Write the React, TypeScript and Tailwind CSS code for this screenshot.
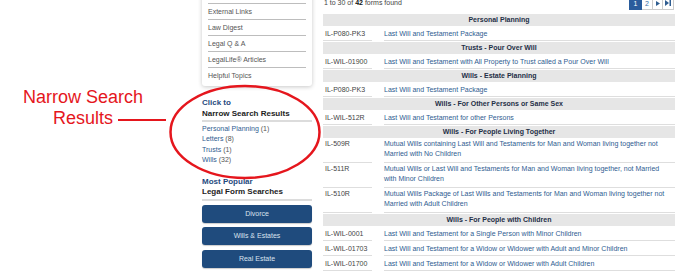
import React from 'react'

type Row =
  | { kind: 'group'; label: string }
  | { kind: 'form'; code: string; title: string; tall?: boolean }

const rows: Row[] = [
  { kind: 'group', label: 'Personal Planning' },
  { kind: 'form', code: 'IL-P080-PK3', title: 'Last Will and Testament Package' },
  { kind: 'group', label: 'Trusts - Pour Over Will' },
  { kind: 'form', code: 'IL-WIL-01900', title: 'Last Will and Testament with All Property to Trust called a Pour Over Will' },
  { kind: 'group', label: 'Wills - Estate Planning' },
  { kind: 'form', code: 'IL-P080-PK3', title: 'Last Will and Testament Package' },
  { kind: 'group', label: 'Wills - For Other Persons or Same Sex' },
  { kind: 'form', code: 'IL-WIL-512R', title: 'Last Will and Testament for other Persons' },
  { kind: 'group', label: 'Wills - For People Living Together' },
  { kind: 'form', code: 'IL-509R', title: 'Mutual Wills containing Last Will and Testaments for Man and Woman living together not Married with No Children', tall: true },
  { kind: 'form', code: 'IL-511R', title: 'Mutual Wills or Last Will and Testaments for Man and Woman living together, not Married with Minor Children', tall: true },
  { kind: 'form', code: 'IL-510R', title: 'Mutual Wills Package of Last Wills and Testaments for Man and Woman living together not Married with Adult Children', tall: true },
  { kind: 'group', label: 'Wills - For People with Children' },
  { kind: 'form', code: 'IL-WIL-0001', title: 'Last Will and Testament for a Single Person with Minor Children' },
  { kind: 'form', code: 'IL-WIL-01703', title: 'Last Will and Testament for a Widow or Widower with Adult and Minor Children' },
  { kind: 'form', code: 'IL-WIL-01700', title: 'Last Will and Testament for a Widow or Widower with Adult Children' },
]

// first entry is the row scrolled out of view above the crop
const menu = ['', 'External Links', 'Law Digest', 'Legal Q & A', 'LegalLife® Articles', 'Helpful Topics']
const narrow = ['Personal Planning (1)', 'Letters (8)', 'Trusts (1)', 'Wills (32)']
const popular = ['Divorce', 'Wills & Estates', 'Real Estate']

export default function App() {
  return (
    <div className="relative w-[697px] h-[271px] overflow-hidden bg-white font-['Liberation_Sans',Arial,sans-serif]">
      <div className="flex items-start pl-[202px]">
        {/* Sidebar */}
        <aside className="w-[110px] -mt-[12px]">
          <div className="bg-white px-[6px] pb-[2px] rounded-b-[3px] shadow-[0_1px_4px_rgba(0,0,0,0.22)]">
            {menu.map((item, i) => (
              <div
                key={i}
                className={`h-[16px] leading-[16px] text-[7px] text-[#555] ${i < menu.length - 1 ? 'border-b border-[#bdbdbd]' : ''}`}
              >
                {item}
              </div>
            ))}
          </div>

          <div className="mt-[10.5px] text-[8px] leading-[11px] font-bold border-b-2 border-[#dcdcdc] pb-[1px]">
            <div className="text-[#1f4a7e]">Click to</div>
            <div className="text-[#222]">Narrow Search Results</div>
          </div>
          <div className="pt-[2px] text-[7px] leading-[10.5px]">
            {narrow.map((n) => {
              const [name, count] = n.split(' (')
              return (
                <div key={n}>
                  <span className="text-[#2f5d91]">{name}</span>
                  <span className="text-[#555]"> ({count}</span>
                </div>
              )
            })}
          </div>

          <div className="mt-[11px] text-[8px] leading-[10px] font-bold border-b-2 border-[#dcdcdc] pb-[2px]">
            <div className="text-[#1f4a7e]">Most Popular</div>
            <div className="text-[#222]">Legal Form Searches</div>
          </div>
          <div className="mt-[4px] flex flex-col gap-[4.5px]">
            {popular.map((p) => (
              <div
                key={p}
                className="h-[18px] rounded-[3px] bg-[#1f4b7d] text-[#d9e2ee] text-[7px] leading-[18px] text-center shadow-[0_1px_1px_rgba(0,0,0,0.2)]"
              >
                {p}
              </div>
            ))}
          </div>
        </aside>

        {/* Results */}
        <main className="ml-[11px] w-[352px] -mt-[6px]">
          <div className="flex items-end justify-between h-[16px]">
            <div className="text-[7px] leading-[10px] text-[#444] pl-[1px] mb-[2px]">
              1 to 30 of <b className="text-[#111]">42</b> forms found
            </div>
            <div className="flex h-[14px] text-[7px] leading-[13px] mr-[1px]">
              <div className="w-[13px] bg-[#2a5c9c] text-white text-center border border-[#2a5c9c]">1</div>
              <div className="w-[11px] border border-[#ccc] border-l-0 text-[#3a6ea5] text-center">2</div>
              <div className="w-[10px] border border-[#ccc] border-l-0 flex items-center justify-center">
                <svg width="4" height="5" viewBox="0 0 4 5"><path d="M0 0 L4 2.5 L0 5 Z" fill="#2f5d91" /></svg>
              </div>
              <div className="w-[11px] border border-[#ccc] border-l-0 flex items-center justify-center">
                <svg width="6" height="6" viewBox="0 0 6 6"><path d="M0 0 L4 3 L0 6 Z" fill="#2f5d91" /><rect x="4.5" y="0" width="1.5" height="6" fill="#2f5d91" /></svg>
              </div>
            </div>
          </div>

          <div className="mt-[3.5px] flex flex-col gap-[1px]">
            {rows.map((r, i) =>
              r.kind === 'group' ? (
                <div
                  key={i}
                  className="h-[12px] bg-[#e6e6e6] text-center font-bold text-[7px] leading-[12px] text-[#1f2f47]"
                >
                  {r.label}
                </div>
              ) : (
                <div key={i} className={`flex text-[7px] ${r.tall ? 'h-[24px] leading-[10px]' : 'h-[14px] leading-[13px]'}`}>
                  <div className="w-[49px] pl-[2px] text-[#444] border-b border-[#dedede] whitespace-nowrap">{r.code}</div>
                  <div className="ml-[12px] flex-1 pr-[6px] text-[#2f5d91] border-b border-[#dedede]">{r.title}</div>
                </div>
              )
            )}
          </div>
        </main>
      </div>

      {/* Annotation */}
      <div className="absolute left-[10px] top-[87px] w-[146px] text-center text-[18px] leading-[21px] text-[#e5161d]">
        <div>Narrow Search</div>
        <div>Results</div>
      </div>
      <div className="absolute left-[118px] top-[119px] w-[48px] h-[2px] bg-[#e5161d]" />
      <svg className="absolute left-[167px] top-[83px]" width="156" height="98" viewBox="0 0 156 98">
        <ellipse cx="78" cy="49" rx="74.5" ry="46" fill="none" stroke="#e5161d" strokeWidth="2.5" />
      </svg>
    </div>
  )
}
